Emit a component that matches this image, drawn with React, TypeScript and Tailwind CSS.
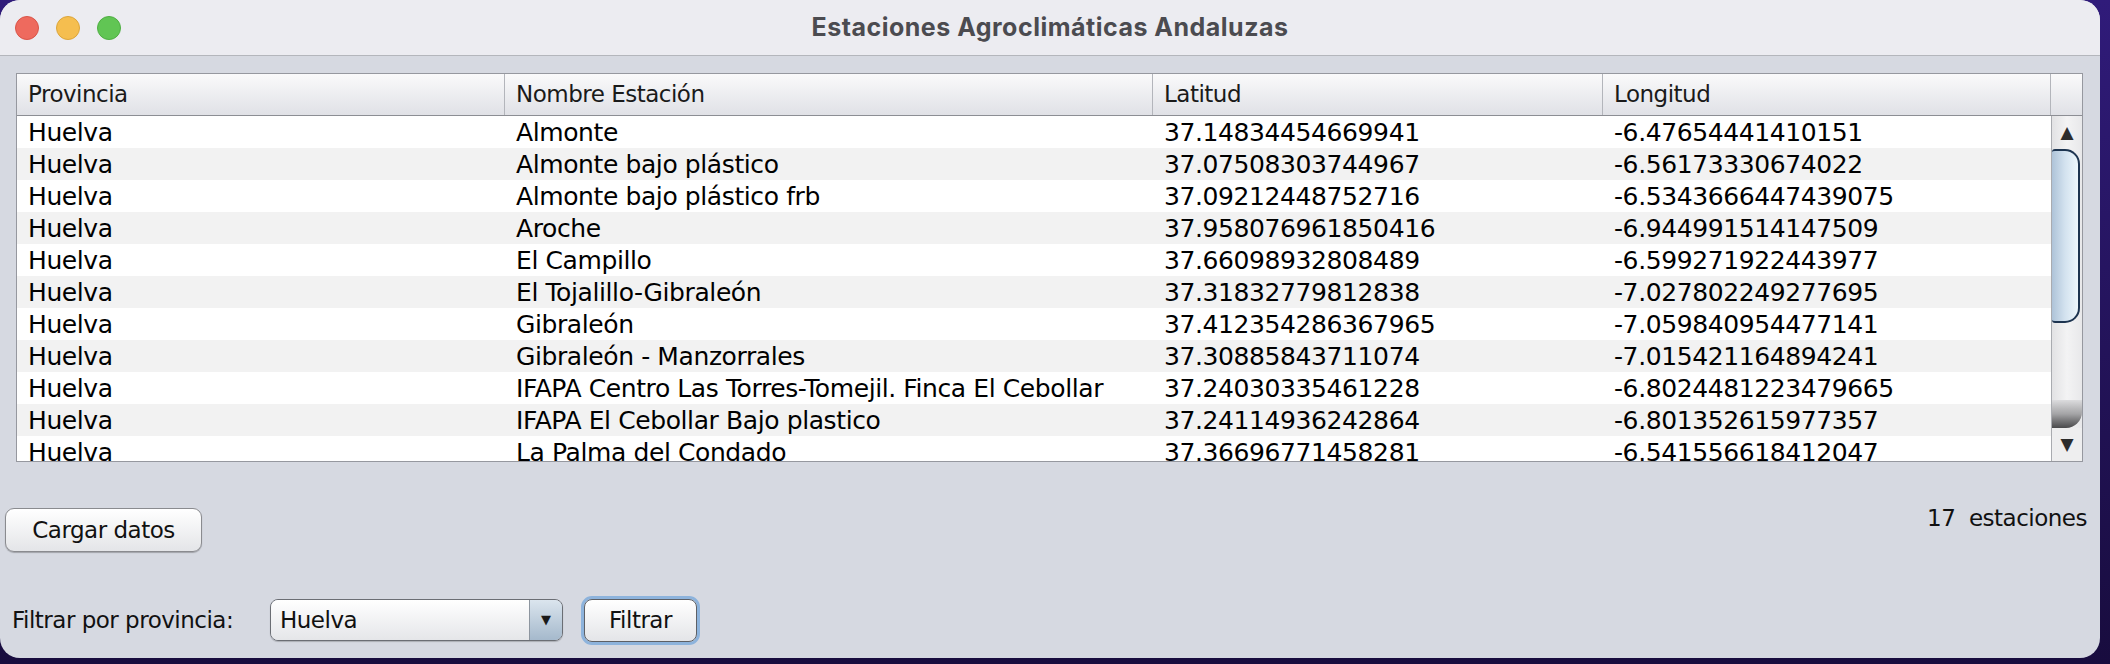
import React from "react"

type Row = [string, string, string, string]

const rows: Row[] = [
  ["Huelva", "Almonte", "37.14834454669941", "-6.47654441410151"],
  ["Huelva", "Almonte bajo plástico", "37.07508303744967", "-6.56173330674022"],
  ["Huelva", "Almonte bajo plástico frb", "37.09212448752716", "-6.5343666447439075"],
  ["Huelva", "Aroche", "37.958076961850416", "-6.944991514147509"],
  ["Huelva", "El Campillo", "37.66098932808489", "-6.599271922443977"],
  ["Huelva", "El Tojalillo-Gibraleón", "37.31832779812838", "-7.027802249277695"],
  ["Huelva", "Gibraleón", "37.412354286367965", "-7.059840954477141"],
  ["Huelva", "Gibraleón - Manzorrales", "37.30885843711074", "-7.015421164894241"],
  ["Huelva", "IFAPA Centro Las Torres-Tomejil. Finca El Cebollar", "37.24030335461228", "-6.8024481223479665"],
  ["Huelva", "IFAPA El Cebollar Bajo plastico", "37.24114936242864", "-6.801352615977357"],
  ["Huelva", "La Palma del Condado", "37.36696771458281", "-6.541556618412047"],
]

const headers = ["Provincia", "Nombre Estación", "Latitud", "Longitud"]

const cols = "grid grid-cols-[488px_648px_450px_448px]"

function TrafficLights() {
  return (
    <div className="flex items-center gap-[17px] pl-[15px]">
      <span className="w-[24px] h-[24px] rounded-full bg-[#ee6a5e] border border-[#d95448]" />
      <span className="w-[24px] h-[24px] rounded-full bg-[#f5be4f] border border-[#dba53b]" />
      <span className="w-[24px] h-[24px] rounded-full bg-[#61c554] border border-[#4fae43]" />
    </div>
  )
}

function Scrollbar() {
  return (
    <div className="w-[31px] h-full flex flex-col border-l border-[#a9abb0] bg-gradient-to-r from-[#e2e2e4] via-[#f3f3f4] to-[#e8e8ea]">
      <div className="h-[32px] flex items-center justify-center text-[#2c2c2c] text-[17px] leading-none">
        ▲
      </div>
      <div className="flex-1 relative">
        <div className="absolute left-0 right-[2px] top-[1px] h-[174px] rounded-r-[15px] rounded-l-[3px] border-[2px] border-l-0 border-[#1d3450] bg-gradient-to-r from-[#aec3d8] via-[#d3e2ef] to-[#eef7fc]" />
        <div className="absolute left-0 right-0 bottom-0 h-[28px] rounded-br-[16px] bg-gradient-to-b from-[#dcdcde] via-[#a4a4a6] to-[#4a4a4c]" />
      </div>
      <div className="h-[33px] flex items-center justify-center text-[#2c2c2c] text-[17px] leading-none bg-[#eeeeef]">
        ▼
      </div>
    </div>
  )
}

export default function App() {
  return (
    <div className="w-[2110px] h-[664px] overflow-hidden bg-gradient-to-b from-[#301b7a] to-[#180c3e] font-['DejaVu_Sans',sans-serif]">
      <div className="w-[2100px] h-[658px] rounded-[20px] overflow-hidden bg-[#d6d9e1] flex flex-col">
        {/* title bar */}
        <div className="h-[56px] shrink-0 relative flex items-center bg-[#ececf1] border-b border-[#b4b6bc]">
          <TrafficLights />
          <div className="absolute inset-0 flex items-center justify-center font-['Inter',sans-serif] font-bold text-[25px] tracking-[0.5px] text-[#4b4b50]">
            Estaciones Agroclimáticas Andaluzas
          </div>
        </div>

        {/* table */}
        <div className="mt-[17px] ml-[16px] w-[2067px] border border-[#96989f] bg-white flex flex-col">
          <div className="flex h-[42px] border-b border-[#8c8e94] bg-gradient-to-b from-[#fafafb] to-[#e0e1e6]">
            <div className={cols}>
              {headers.map((h) => (
                <div
                  key={h}
                  className="h-[41px] pl-[11px] flex items-center border-r border-[#b3b5bb] text-[23px] text-[#1a1a1a] tracking-[-0.5px]"
                >
                  {h}
                </div>
              ))}
            </div>
            <div className="w-[31px]" />
          </div>
          <div className="flex h-[345px] overflow-hidden">
            <div className="w-[2034px] flex flex-col">
              {rows.map((r, i) => (
                <div
                  key={i}
                  className={`${cols} h-[32px] shrink-0 ${i % 2 === 0 ? "bg-white" : "bg-[#f2f2f2]"}`}
                >
                  {r.map((c, j) => (
                    <div
                      key={j}
                      className="pl-[11px] flex items-center text-[25px] leading-none text-black whitespace-nowrap tracking-[-0.4px]"
                    >
                      {c}
                    </div>
                  ))}
                </div>
              ))}
            </div>
            <Scrollbar />
          </div>
        </div>

        {/* load row */}
        <div className="mt-[46px] flex items-start justify-between pl-[5px] pr-[13px]">
          <button className="w-[197px] h-[44px] rounded-[9px] border border-[#8a8b8f] bg-gradient-to-b from-[#ffffff] to-[#e4e5e8] shadow-[0_1px_1px_rgba(0,0,0,0.25)] text-[23px] text-[#111] tracking-[-0.5px]">
            Cargar datos
          </button>
          <div className="-mt-[4px] h-[28px] flex items-center text-[23px] text-[#111] whitespace-pre tracking-[-0.5px]">
            {"17  estaciones"}
          </div>
        </div>

        {/* filter row */}
        <div className="mt-[43px] h-[50px] flex items-center pl-[12px]">
          <span className="w-[258px] text-[23px] text-[#111] tracking-[-0.5px]">Filtrar por provincia:</span>
          <div className="w-[293px] h-[42px] flex rounded-[8px] border border-[#6b6e74] overflow-hidden shadow-[0_1px_1px_rgba(0,0,0,0.2)]">
            <div className="flex-1 flex items-center pl-[9px] bg-gradient-to-b from-[#ffffff] to-[#e5e6e9] text-[23px] text-[#111] tracking-[-0.5px]">
              Huelva
            </div>
            <div className="w-[33px] flex items-center justify-center border-l border-[#8d959f] bg-gradient-to-b from-[#dbe5ee] to-[#a5b9cc] text-[13px] text-[#1a1a1a]">
              ▼
            </div>
          </div>
          <div className="ml-[18px] rounded-[11px] border-[3px] border-[#8db3dc] p-0">
            <button className="w-[113px] h-[43px] rounded-[8px] border border-[#5d6066] bg-gradient-to-b from-[#ffffff] to-[#e4e5e8] text-[23px] text-[#111] tracking-[-0.5px]">
              Filtrar
            </button>
          </div>
        </div>
      </div>
    </div>
  )
}
